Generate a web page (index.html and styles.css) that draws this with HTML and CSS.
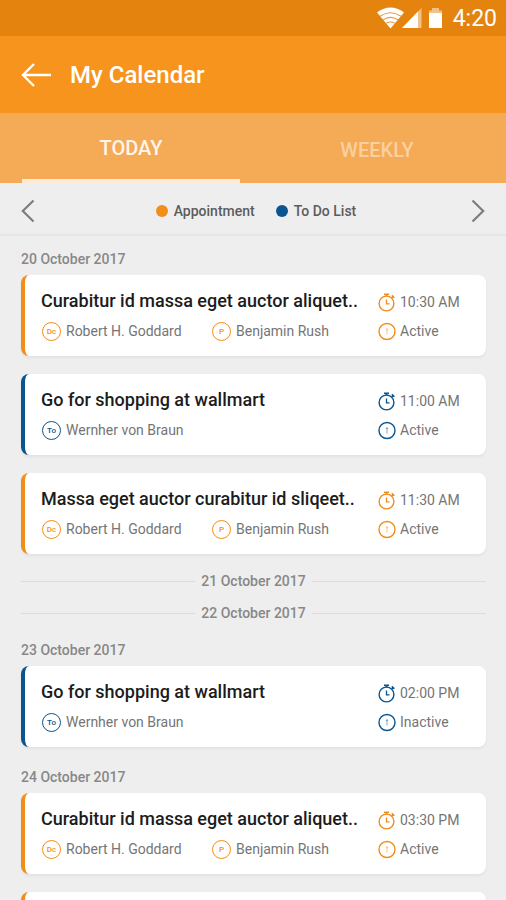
FILE: index.html
```html
<!DOCTYPE html>
<html lang="en">
<head>
<meta charset="utf-8">
<meta name="viewport" content="width=device-width, initial-scale=1">
<title>My Calendar</title>
<link rel="stylesheet" href="styles.css">
</head>
<body>
<svg class="sprite" aria-hidden="true">
  <symbol id="stopwatch" viewBox="0 0 18 20">
    <circle cx="8.5" cy="11.5" r="7.4" fill="none" stroke="currentColor" stroke-width="1.4"/>
    <path d="M8.500 4V2.500" fill="none" stroke="currentColor" stroke-width="2"/>
    <path d="M6 2.200h5M13.800 5.800l1.600-1.600M13.800 3.400l2.600 2.400" fill="none" stroke="currentColor" stroke-width="1.500"/>
    <path d="M8.500 7.500v4.300h3" fill="none" stroke="currentColor" stroke-width="1.300"/>
  </symbol>
  <symbol id="status" viewBox="0 0 18 20">
    <circle cx="9" cy="10.500" r="8" fill="none" stroke="currentColor" stroke-width="1.400"/>
    <path d="M9 7.500v6M8 8.900l1-1.200 1 1.200" fill="none" stroke="currentColor" stroke-width="1" opacity=".5"/>
  </symbol>
</svg>
<div class="screen">
  <div class="statusbar">
    <svg width="66" height="22" viewBox="0 0 66 22" aria-hidden="true">
      <path d="M0 5.500Q13.500-4.500 27 5.500L13.500 21.500Z" fill="#fff"/>
      <path d="M3 9.200q10.500-7 21 0M6 12.900q7.500-5 15 0M9.300 16.300q4.200-2.600 8.400 0" fill="none" stroke="#e9973a" stroke-width="1.100"/>
      <path d="M44.500 1v20H25Z" fill="#f4c08a"/>
      <path d="M41 4.600V21H25Z" fill="#fff"/>
      <path d="M52 3.500h3V1h7v2.500h3V7H52Z" fill="#f4c08a"/>
      <path d="M52 6h13v15H52Z" fill="#fff"/>
    </svg>
    <time>4:20</time>
  </div>
  <header class="appbar">
    <button class="back" type="button" aria-label="Back">
      <svg width="31" height="26" viewBox="0 0 31 26"><path d="M13 2 2 13l11 11M2 13h28" fill="none" stroke="#fff" stroke-width="2.400"/></svg>
    </button>
    <h1>My Calendar</h1>
  </header>
  <nav class="tabs">
    <a class="tab active" href="#today">TODAY</a>
    <a class="tab" href="#weekly">WEEKLY</a>
  </nav>
  <div class="toolbar">
    <button type="button" aria-label="Previous day">
      <svg width="14" height="24" viewBox="0 0 14 24"><path d="M12.500 1.500 1.800 12l10.700 10.500" fill="none" stroke="#7d7d7d" stroke-width="2.200"/></svg>
    </button>
    <ul class="legend">
      <li class="appointment">Appointment</li>
      <li class="todo">To Do List</li>
    </ul>
    <button type="button" aria-label="Next day">
      <svg width="14" height="24" viewBox="0 0 14 24"><path d="M1.500 1.500 12.200 12 1.500 22.500" fill="none" stroke="#7d7d7d" stroke-width="2.200"/></svg>
    </button>
  </div>
  <main class="agenda" id="today">
    <section class="day">
      <h2>20 October 2017</h2>
      <div class="cards">
        <article class="card appointment">
          <div class="info">
            <h3>Curabitur id massa eget auctor aliquet..</h3>
            <div class="people"><span class="person"><i>Dc</i>Robert H. Goddard</span><span class="person"><i>P</i>Benjamin Rush</span></div>
          </div>
          <div class="meta"><span><svg><use href="#stopwatch"/></svg>10:30 AM</span><span><svg><use href="#status"/></svg>Active</span></div>
        </article>
        <article class="card todo">
          <div class="info">
            <h3>Go for shopping at wallmart</h3>
            <div class="people"><span class="person"><i>To</i>Wernher von Braun</span></div>
          </div>
          <div class="meta"><span><svg><use href="#stopwatch"/></svg>11:00 AM</span><span><svg><use href="#status"/></svg>Active</span></div>
        </article>
        <article class="card appointment">
          <div class="info">
            <h3>Massa eget auctor curabitur id sliqeet..</h3>
            <div class="people"><span class="person"><i>Dc</i>Robert H. Goddard</span><span class="person"><i>P</i>Benjamin Rush</span></div>
          </div>
          <div class="meta"><span><svg><use href="#stopwatch"/></svg>11:30 AM</span><span><svg><use href="#status"/></svg>Active</span></div>
        </article>
      </div>
    </section>
    <div class="empty-days">
      <h2>21 October 2017</h2>
      <h2>22 October 2017</h2>
    </div>
    <section class="day">
      <h2>23 October 2017</h2>
      <div class="cards">
        <article class="card todo">
          <div class="info">
            <h3>Go for shopping at wallmart</h3>
            <div class="people"><span class="person"><i>To</i>Wernher von Braun</span></div>
          </div>
          <div class="meta"><span><svg><use href="#stopwatch"/></svg>02:00 PM</span><span><svg><use href="#status"/></svg>Inactive</span></div>
        </article>
      </div>
    </section>
    <section class="day">
      <h2>24 October 2017</h2>
      <div class="cards">
        <article class="card appointment">
          <div class="info">
            <h3>Curabitur id massa eget auctor aliquet..</h3>
            <div class="people"><span class="person"><i>Dc</i>Robert H. Goddard</span><span class="person"><i>P</i>Benjamin Rush</span></div>
          </div>
          <div class="meta"><span><svg><use href="#stopwatch"/></svg>03:30 PM</span><span><svg><use href="#status"/></svg>Active</span></div>
        </article>
        <article class="card appointment"></article>
      </div>
    </section>
  </main>
</div>
</body>
</html>
```
FILE: styles.css
```css
* { box-sizing: border-box; }

body, h1, h2, h3, ul { margin: 0; padding: 0; }

body {
  font-family: Roboto, "Liberation Sans", sans-serif;
  font-size: 14px;
  color: #757575;
  background: #eee;
}

button { border: 0; padding: 0; background: none; display: flex; cursor: pointer; }

.sprite { display: none; }

.screen {
  height: 100vh;
  display: flex;
  flex-direction: column;
}

.statusbar {
  flex: none;
  height: 36px;
  padding: 0 9px;
  display: flex;
  align-items: center;
  justify-content: flex-end;
  gap: 10px;
  background: #e5830f;
  color: #fff;
  font-size: 23px;
}

.appbar {
  flex: none;
  height: 77px;
  padding: 0 21px;
  display: flex;
  align-items: center;
  gap: 18px;
  background: #f7941e;
}

.appbar h1 { font-size: 24px; font-weight: 500; color: #fff; }

.tabs {
  flex: none;
  height: 70px;
  padding: 0 20px 0 22px;
  display: grid;
  grid-template-columns: 1fr 1fr;
  gap: 28px;
  background: #f5aa56;
}

.tab {
  display: flex;
  align-items: center;
  justify-content: center;
  padding-top: 4px;
  font-size: 20px;
  font-weight: 500;
  color: #fad09f;
  text-decoration: none;
}

.tab.active {
  border-bottom: 4px solid #fdebd8;
  color: #fff5ea;
}

.toolbar {
  flex: none;
  height: 53px;
  padding: 4px 21px 0;
  display: flex;
  align-items: center;
  justify-content: space-between;
  border-bottom: 2px solid #e6e6e6;
}

.legend {
  padding-left: 6px;
  display: flex;
  gap: 21px;
  list-style: none;
  font-weight: 500;
  color: #5c5c5c;
}

.legend li { display: flex; align-items: center; gap: 6px; }

.legend li::before {
  content: "";
  width: 12px;
  height: 12px;
  border-radius: 50%;
  background: var(--accent);
}

.appointment { --accent: #f28d1a; }
.todo { --accent: #0a5590; }

.agenda {
  flex: 1;
  min-height: 0;
  padding: 13px 20px 20px 21px;
  display: flex;
  flex-direction: column;
  gap: 20px;
  overflow-y: auto;
  scrollbar-width: none;
}

h2 { font-size: 14px; line-height: 20px; font-weight: 500; color: #888; }

.day { display: flex; flex-direction: column; gap: 6px; }

.cards { display: flex; flex-direction: column; gap: 18px; }

.card {
  min-height: 81px;
  padding-left: 16px;
  display: flex;
  border-left: 4px solid var(--accent);
  border-radius: 8px;
  background: #fff;
  box-shadow: 0 2px 3px rgba(0, 0, 0, 0.05);
}

.info { flex: 1; min-width: 0; padding: 16px 0 15px; }

h3 { font-size: 18px; line-height: 20px; font-weight: 500; color: #1c1c1c; white-space: nowrap; }

.people {
  margin-top: 10px;
  padding-left: 1px;
  display: grid;
  grid-template-columns: 1fr 1fr;
  gap: 4px;
}

.person {
  display: flex;
  align-items: center;
  gap: 5px;
  line-height: 20px;
  white-space: nowrap;
}

.person i {
  width: 19px;
  height: 19px;
  border: 1px solid var(--accent);
  border-radius: 50%;
  font-size: 8px;
  line-height: 17px;
  font-style: normal;
  font-weight: 500;
  text-align: center;
  color: var(--accent);
}

.meta {
  width: 108px;
  padding: 17px 0 15px;
  display: flex;
  flex-direction: column;
  gap: 9px;
}

.meta span { display: flex; align-items: center; gap: 4px; line-height: 20px; }

.meta svg { width: 18px; height: 20px; color: var(--accent); }

.empty-days { display: flex; flex-direction: column; gap: 18px; }

.empty-days h2 { display: flex; align-items: center; gap: 6px; line-height: 14px; }

.empty-days h2::before,
.empty-days h2::after {
  content: "";
  flex: 1;
  height: 1px;
  background: #dcdcdc;
}
```
